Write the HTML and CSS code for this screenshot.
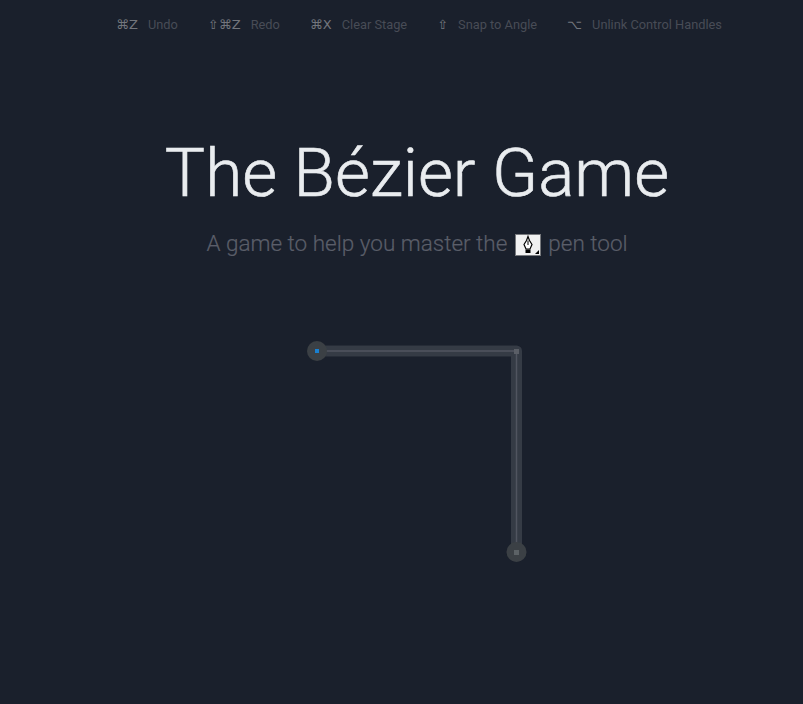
FILE: index.html
```html
<!DOCTYPE html>
<html lang="en">
<head>
  <meta charset="UTF-8" />
  <meta name="viewport" content="width=device-width, initial-scale=1.0" />
  <title>The Bézier Game</title>
  <link rel="stylesheet" href="styles.css">
</head>
<body>
  <div class="intro">
    <!-- Keyboard shortcuts -->
    <ul class="shortcuts">
      <li><span class="keys">⌘Z</span><span class="label">Undo</span></li>
      <li><span class="keys">⇧⌘Z</span><span class="label">Redo</span></li>
      <li><span class="keys">⌘X</span><span class="label">Clear Stage</span></li>
      <li><span class="keys">⇧</span><span class="label">Snap to Angle</span></li>
      <li><span class="keys">⌥</span><span class="label">Unlink Control Handles</span></li>
    </ul>

    <h1 class="title">The Bézier Game</h1>
    <p class="subtitle">
      A game to help you master the
      <svg class="pen-icon" viewBox="0 0 26 22" width="26" height="22">
        <rect x="0.5" y="0.5" width="25" height="21" fill="#f1f1f1" stroke="#77797d" />
        <path d="M13 2.500l-1.500 4-2.500 4 2 4.500h4l2-4.500-2.500-4z" fill="#fff" stroke="#000" stroke-width="1.200" />
        <path d="M13 6.500v4.500" stroke="#000" />
        <rect x="10.500" y="15.500" width="5" height="3.500" fill="#000" />
        <path d="M24 16v4h-4z" fill="#000" />
      </svg>
      pen tool
    </p>
  </div>

  <!-- Level 1 path -->
  <svg class="stage" viewBox="0 0 803 380" width="803" height="380">
    <defs>
      <filter id="soft"><feGaussianBlur stdDeviation="0.6" /></filter>
    </defs>
    <path class="guide" d="M317 47H516.500V248" filter="url(#soft)" />
    <path class="guide-line" d="M317 47H516.500V248" />
    <circle class="anchor" cx="317" cy="47" r="10" filter="url(#soft)" />
    <circle class="anchor" cx="516.500" cy="248" r="10" filter="url(#soft)" />
    <rect class="corner" x="514" y="45" width="5" height="5" />
    <rect class="point" x="514" y="246" width="5" height="5" />
    <rect class="start" x="315" y="45" width="4" height="4" />
  </svg>
</body>
</html>
```

FILE: styles.css
```css
* {
  margin: 0;
  padding: 0;
  box-sizing: border-box;
}

body {
  height: 704px;
  overflow: hidden;
  background-color: #1a202c;
  font-family: Roboto, "Open Sans", sans-serif;
}

/* Title block sits a little right of centre */
.intro {
  padding-left: 31px;
}

/* Shortcut bar */
.shortcuts {
  display: flex;
  justify-content: center;
  gap: 30px;
  padding-top: 15px;
  padding-left: 4px;
  list-style: none;
  font-size: 13px;
  line-height: 19px;
}

.keys {
  margin-right: 10px;
  color: #73767d;
  font-family: "DejaVu Sans", sans-serif;
}

.label {
  color: #484c56;
  font-size: 12.800px;
}

/* Heading */
.title {
  margin-top: 97px;
  color: #e9ecef;
  font-size: 67.500px;
  font-weight: 300;
  line-height: 84px;
  text-align: center;
  -webkit-text-stroke: 0.6px #e9ecef;
}

.subtitle {
  margin-top: 13px;
  color: #5a5e69;
  font-size: 22.500px;
  font-weight: 300;
  line-height: 30px;
  text-align: center;
  -webkit-text-stroke: 0.2px #5a5e69;
}

.pen-icon {
  margin: 0 2px;
  vertical-align: -5px;
}

/* Drawing stage */
.stage {
  display: block;
  margin-top: 46px;
}

.guide {
  fill: none;
  stroke: #353a45;
  stroke-width: 11;
  stroke-linejoin: round;
}

.guide-line {
  fill: none;
  stroke: #515560;
  stroke-width: 1.500;
}

.anchor {
  fill: #3b4044;
}

.corner {
  fill: #5a5e66;
}

.point {
  fill: #5c6266;
}

.start {
  fill: #1a80d0;
}
```
